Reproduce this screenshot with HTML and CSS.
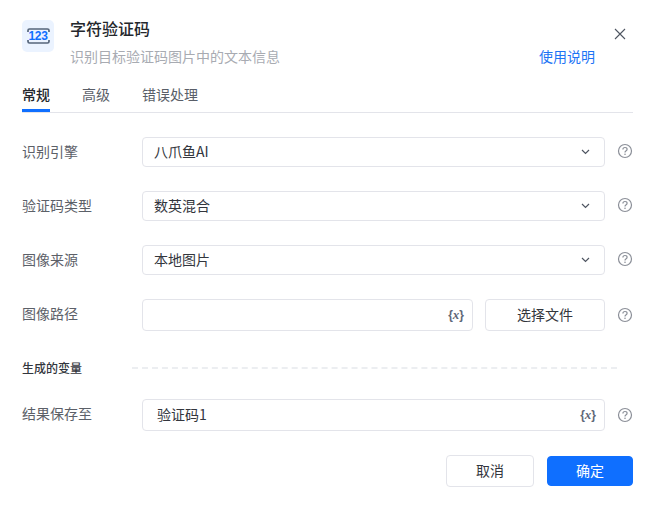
FILE: index.html
```html
<!DOCTYPE html>
<html lang="zh-CN">
<head>
<meta charset="utf-8">
<title>字符验证码</title>
<link rel="stylesheet" href="styles.css">
</head>
<body>
<div class="dialog">
  <header class="head">
    <div class="logo">
      <svg class="frame" width="23" height="16" viewBox="0 0 23 16" fill="none">
        <path d="M1 4V2.500Q1 1 2.500 1H20.500Q22 1 22 2.500V4M1 12V13.500Q1 15 2.500 15H20.500Q22 15 22 13.500V12" stroke="#56657b" stroke-width="1.700"/>
      </svg>
      <span class="digits">123</span>
    </div>
    <div class="head-text">
      <div class="title">字符验证码</div>
      <div class="sub">识别目标验证码图片中的文本信息</div>
    </div>
    <div class="head-side">
      <svg class="close" width="12" height="12" viewBox="0 0 12 12"><path d="M1 1L11 11M11 1L1 11" stroke="#4e5561" stroke-width="1.100"/></svg>
      <a class="link">使用说明</a>
    </div>
  </header>

  <nav class="tabs">
    <span class="tab active">常规</span>
    <span class="tab">高级</span>
    <span class="tab">错误处理</span>
  </nav>

  <div class="row">
    <label class="lbl">识别引擎</label>
    <div class="field select"><span>八爪鱼AI</span><svg class="chev" width="9" height="6" viewBox="0 0 9 6"><path d="M1 1L4.500 4.500L8 1" fill="none" stroke="#4e5561" stroke-width="1.200"/></svg></div>
    <svg class="help" width="16" height="16" viewBox="0 0 16 16"><circle cx="8" cy="8" r="6.500" fill="none" stroke="#8b8f98" stroke-width="1.200"/><path d="M5.900 6.400Q5.900 4.500 8 4.500Q10.100 4.500 10.100 6.200Q10.100 7.200 8.900 7.900Q8 8.400 8 9.500" fill="none" stroke="#8b8f98" stroke-width="1.200"/><circle cx="8" cy="11.300" r=".8" fill="#8b8f98"/></svg>
  </div>
  <div class="row">
    <label class="lbl">验证码类型</label>
    <div class="field select"><span>数英混合</span><svg class="chev" width="9" height="6" viewBox="0 0 9 6"><path d="M1 1L4.500 4.500L8 1" fill="none" stroke="#4e5561" stroke-width="1.200"/></svg></div>
    <svg class="help" width="16" height="16" viewBox="0 0 16 16"><circle cx="8" cy="8" r="6.500" fill="none" stroke="#8b8f98" stroke-width="1.200"/><path d="M5.900 6.400Q5.900 4.500 8 4.500Q10.100 4.500 10.100 6.200Q10.100 7.200 8.900 7.900Q8 8.400 8 9.500" fill="none" stroke="#8b8f98" stroke-width="1.200"/><circle cx="8" cy="11.300" r=".8" fill="#8b8f98"/></svg>
  </div>
  <div class="row">
    <label class="lbl">图像来源</label>
    <div class="field select"><span>本地图片</span><svg class="chev" width="9" height="6" viewBox="0 0 9 6"><path d="M1 1L4.500 4.500L8 1" fill="none" stroke="#4e5561" stroke-width="1.200"/></svg></div>
    <svg class="help" width="16" height="16" viewBox="0 0 16 16"><circle cx="8" cy="8" r="6.500" fill="none" stroke="#8b8f98" stroke-width="1.200"/><path d="M5.900 6.400Q5.900 4.500 8 4.500Q10.100 4.500 10.100 6.200Q10.100 7.200 8.900 7.900Q8 8.400 8 9.500" fill="none" stroke="#8b8f98" stroke-width="1.200"/><circle cx="8" cy="11.300" r=".8" fill="#8b8f98"/></svg>
  </div>
  <div class="row">
    <label class="lbl lbl-tall">图像路径</label>
    <div class="field tall input-short"><span></span><span class="var">{<i>x</i>}</span></div>
    <button class="btn pick">选择文件</button>
    <svg class="help" width="16" height="16" viewBox="0 0 16 16"><circle cx="8" cy="8" r="6.500" fill="none" stroke="#8b8f98" stroke-width="1.200"/><path d="M5.900 6.400Q5.900 4.500 8 4.500Q10.100 4.500 10.100 6.200Q10.100 7.200 8.900 7.900Q8 8.400 8 9.500" fill="none" stroke="#8b8f98" stroke-width="1.200"/><circle cx="8" cy="11.300" r=".8" fill="#8b8f98"/></svg>
  </div>

  <div class="section">
    <span class="section-name">生成的变量</span>
    <span class="dash"></span>
  </div>

  <div class="row result">
    <label class="lbl lbl-tall">结果保存至</label>
    <div class="field tall value"><span>验证码1</span><span class="var">{<i>x</i>}</span></div>
    <svg class="help" width="16" height="16" viewBox="0 0 16 16"><circle cx="8" cy="8" r="6.500" fill="none" stroke="#8b8f98" stroke-width="1.200"/><path d="M5.900 6.400Q5.900 4.500 8 4.500Q10.100 4.500 10.100 6.200Q10.100 7.200 8.900 7.900Q8 8.400 8 9.500" fill="none" stroke="#8b8f98" stroke-width="1.200"/><circle cx="8" cy="11.300" r=".8" fill="#8b8f98"/></svg>
  </div>

  <footer class="foot">
    <button class="btn cancel">取消</button>
    <button class="btn ok">确定</button>
  </footer>
</div>
</body>
</html>
```
FILE: styles.css
```css
* { box-sizing: border-box; }
html, body { margin: 0; padding: 0; background: #fff; }
body {
  width: 654px;
  height: 507px;
  overflow: hidden;
  font-family: "Noto Sans CJK SC", "Noto Sans", sans-serif;
  color: #33363d;
  font-size: 14px;
}
.dialog { padding: 20px 21px 0 22px; }
.head { display: flex; height: 52px; }
.logo {
  width: 32px;
  height: 32px;
  background: #ebf3ff;
  border-radius: 5px;
  display: flex;
  align-items: center;
  justify-content: center;
  position: relative;
}
.frame { display: block; }
.digits {
  position: absolute;
  left: 0;
  right: 0;
  top: 0;
  text-align: center;
  font-family: "Liberation Sans", sans-serif;
  font-size: 12px;
  font-weight: 700;
  line-height: 32px;
  letter-spacing: -.4px;
  color: #0f6fff;
}
.head-text { margin-left: 16px; flex: 1; }
.title { font-size: 16px; line-height: 22px; font-weight: 500; color: #24272c; margin-top: -3px; }
.sub { font-size: 14px; line-height: 20px; margin-top: 7px; color: #a8abb2; }
.head-side { width: 94px; position: relative; }
.close { position: absolute; right: 7px; top: 8px; }
.link { position: absolute; left: 0; top: 26px; line-height: 20px; color: #1c74f5; }
.tabs {
  display: flex;
  gap: 32px;
  height: 41px;
  border-bottom: 1px solid #e3e4ea;
}
.tab { line-height: 20px; padding-top: 12px; color: #595e68; height: 40px; }
.tab.active { color: #24272c; font-weight: 500; border-bottom: 3px solid #0f6fff; }
.row { display: flex; align-items: center; margin-top: 24px; }
.lbl { width: 120px; flex: none; color: #5c6068; margin-bottom: 3px; }
.lbl-tall { margin-bottom: 5px; }
.field {
  height: 30px;
  width: 463px;
  flex: none;
  border: 1px solid #e3e4ea;
  border-radius: 4px;
  display: flex;
  align-items: center;
  justify-content: space-between;
  padding: 0 11px;
  color: #33363d;
}
.field > span:first-child { margin-bottom: 2px; }
.chev { margin-right: 3px; }
.tall { height: 32px; }
.input-short { width: 331px; padding-right: 8px; }
.value { padding-left: 14px; padding-right: 8px; }
.var {
  font-family: "Liberation Sans", sans-serif;
  font-size: 12px;
  font-weight: 700;
  color: #5f6878;
}
.var i { font-family: "Liberation Serif", serif; font-size: 13px; }
.btn {
  font-family: inherit;
  font-size: 14px;
  color: #33363d;
  background: #fff;
  border: 1px solid #e3e4ea;
  border-radius: 4px;
  padding: 0 0 2px;
}
.pick { width: 120px; height: 32px; margin-left: 12px; flex: none; }
.help { flex: none; margin-left: 12px; }
.select + .help { margin-bottom: 2px; }
.section { display: flex; align-items: center; margin-top: 28px; height: 18px; }
.section-name { width: 110px; flex: none; font-size: 12px; font-weight: 500; color: #33363d; margin-bottom: 2px; }
.dash { width: 485px; border-top: 2px dashed #eceef1; }
.result { margin-top: 22px; }
.foot { display: flex; justify-content: flex-end; align-items: flex-start; gap: 13px; margin-top: 24px; }
.cancel { width: 88px; height: 32px; }
.ok { width: 86px; height: 30px; margin-top: 1px; background: #0f6fff; border-color: #0f6fff; color: #fff; }
```
